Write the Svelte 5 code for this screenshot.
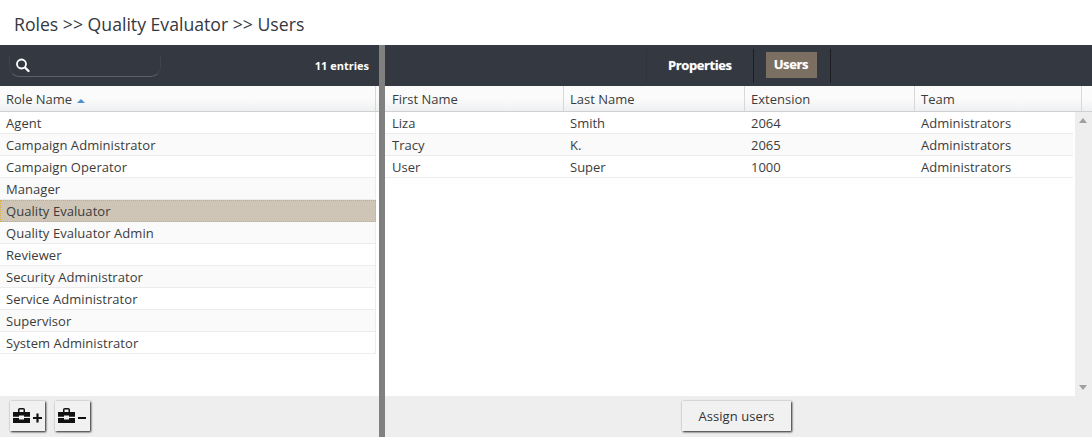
<script>
  const roles = [
    'Agent', 'Campaign Administrator', 'Campaign Operator', 'Manager', 'Quality Evaluator',
    'Quality Evaluator Admin', 'Reviewer', 'Security Administrator', 'Service Administrator',
    'Supervisor', 'System Administrator'
  ];
  const selected = 'Quality Evaluator';
  const users = [
    ['Liza', 'Smith', '2064', 'Administrators'],
    ['Tracy', 'K.', '2065', 'Administrators'],
    ['User', 'Super', '1000', 'Administrators']
  ];
  const columns = [
    ['First Name', 178],
    ['Last Name', 181],
    ['Extension', 170],
    ['Team', 167]
  ];
</script>

<div class="page">
  <h1 class="title">Roles &gt;&gt; Quality Evaluator &gt;&gt; Users</h1>
  <div class="panes">
    <section class="left">
      <div class="toolbar left-bar">
        <div class="search">
          <svg width="16" height="16" viewBox="0 0 16 16" fill="none" stroke="#fff">
            <circle cx="6.500" cy="6" r="4.500" stroke-width="1.800" />
            <path d="M10 9.500l3.500 3.500" stroke-width="2.400" stroke-linecap="round" />
          </svg>
        </div>
        <span class="count">11 entries</span>
      </div>
      <div class="head role-head">
        <div class="hcell role-cell">Role Name <span class="sort"></span></div>
      </div>
      <div class="body role-body">
        {#each roles as role, i}
          <div class="row role-row" class:alt={i % 2 === 1} class:selected={role === selected}>{role}</div>
        {/each}
      </div>
      <div class="foot left-foot">
        <button class="btn icon-btn" aria-label="Add role">
          <svg width="29" height="16" viewBox="0 0 29 16">
            <path d="M5 4V1.800C5 .8 5.800 0 6.800 0h3.400c1 0 1.800.8 1.800 1.800V4h-1.500V1.500H6.500V4z" fill="#111" />
            <path d="M0 4h17v4.800h-6V7.500H6v1.300H0z" fill="#111" />
            <path d="M0 10h6v1.500h5V10h6v5H0z" fill="#111" />
            <path d="M20 10h9M24.500 5.500v9" stroke="#111" stroke-width="2.200" />
          </svg>
        </button>
        <button class="btn icon-btn" aria-label="Remove role">
          <svg width="29" height="16" viewBox="0 0 29 16">
            <path d="M5 4V1.800C5 .8 5.800 0 6.800 0h3.400c1 0 1.800.8 1.800 1.800V4h-1.500V1.500H6.500V4z" fill="#111" />
            <path d="M0 4h17v4.800h-6V7.500H6v1.300H0z" fill="#111" />
            <path d="M0 10h6v1.500h5V10h6v5H0z" fill="#111" />
            <path d="M20 10h8" stroke="#111" stroke-width="2" />
          </svg>
        </button>
      </div>
    </section>

    <div class="splitter"></div>

    <section class="right">
      <div class="toolbar tabs">
        <div class="tab plain">Properties</div>
        <div class="tab-wrap"><div class="tab active">Users</div></div>
      </div>
      <div class="head user-head">
        {#each columns as [label, width]}
          <div class="hcell" style="width: {width}px">{label}</div>
        {/each}
        <div class="hcell filler"></div>
      </div>
      <div class="body user-body">
        <div class="user-rows">
          {#each users as user, i}
            <div class="row urow" class:alt={i % 2 === 1}>
              {#each user as value, c}
                <div class="ucell" style="width: {columns[c][1]}px">{value}</div>
              {/each}
            </div>
          {/each}
        </div>
        <div class="scrollbar">
          <span class="arrow up"></span>
          <span class="arrow down"></span>
        </div>
      </div>
      <div class="foot right-foot">
        <button class="btn assign">Assign users</button>
      </div>
    </section>
  </div>
</div>

<style>
  :global(body) {
    margin: 0;
    background: #fff;
  }
  .page {
    width: 1092px;
    height: 437px;
    display: flex;
    flex-direction: column;
    overflow: hidden;
    font-family: "Open Sans", sans-serif;
    font-size: 13px;
    color: #3c3c3c;
  }
  .title {
    margin: 0;
    height: 45px;
    box-sizing: border-box;
    padding: 12px 0 0 14px;
    font-size: 17.650px;
    line-height: 25px;
    font-weight: 400;
    color: #343841;
  }
  .panes {
    flex: 1;
    display: flex;
    min-height: 0;
  }
  .left {
    width: 379px;
    display: flex;
    flex-direction: column;
  }
  .right {
    flex: 1;
    min-width: 0;
    display: flex;
    flex-direction: column;
  }
  .splitter {
    width: 6px;
    background: #808080;
  }
  .toolbar {
    height: 41px;
    flex: none;
    background: #343841;
  }
  .left-bar {
    display: flex;
    align-items: center;
    justify-content: space-between;
    padding: 0 10px 0 9px;
  }
  .search {
    width: 152px;
    height: 21px;
    margin-top: 2px;
    box-sizing: border-box;
    padding: 2px 0 0 5px;
    border-bottom: 1px solid #5d6068;
    border-left: 1px solid #3f434c;
    border-right: 1px solid #3f434c;
    border-radius: 0 0 10px 10px;
  }
  .search svg {
    display: block;
  }
  .count {
    color: #fff;
    font-size: 11px;
    font-weight: 700;
  }
  .tabs {
    display: flex;
    justify-content: center;
    align-items: center;
  }
  .tab {
    color: #fff;
    font-size: 13px;
    font-weight: 700;
    letter-spacing: -0.4px;
    text-shadow: 0 0 1px rgba(255, 255, 255, 0.5);
  }
  .tab.plain {
    box-sizing: border-box;
    height: 34px;
    line-height: 33px;
    padding: 0 21px 0 21px;
    border-left: 1px solid #2f333b;
  }
  .tab-wrap {
    box-sizing: border-box;
    height: 34px;
    display: flex;
    align-items: center;
    padding: 0 13px 2px 12px;
    border-left: 1px solid #1b1d22;
    border-right: 1px solid #1b1d22;
  }
  .tab.active {
    height: 26px;
    line-height: 25px;
    padding: 0 9px 0 8px;
    background: #7a6f60;
  }
  .head {
    height: 26px;
    flex: none;
    display: flex;
    box-sizing: border-box;
    border-bottom: 1px solid #cfd0d2;
    background: linear-gradient(#fbfbfb 0 50%, #eff0f1 100%);
  }
  .user-head {
    padding-left: 1px;
  }
  .hcell {
    box-sizing: border-box;
    padding-left: 6px;
    line-height: 27px;
    border-right: 1px solid #d8d8d8;
    white-space: nowrap;
  }
  .role-cell {
    width: 376px;
  }
  .filler {
    flex: 1;
    border-right: 0;
  }
  .sort {
    display: inline-block;
    width: 0;
    height: 0;
    margin: 0 0 1px 1px;
    border-left: 4px solid transparent;
    border-right: 4px solid transparent;
    border-bottom: 4px solid #4a90d0;
  }
  .body {
    flex: 1;
    min-height: 0;
    background: #fff;
  }
  .role-body {
    padding-right: 3px;
  }
  .row {
    height: 22px;
    box-sizing: border-box;
    line-height: 22px;
    padding-left: 6px;
    border-bottom: 1px solid #ececec;
    border-right: 1px solid #ececec;
    white-space: nowrap;
  }
  .role-row {
    letter-spacing: 0.06px;
  }
  .row.alt {
    background: #fafafa;
  }
  .row.selected {
    background: #cfc5b6;
    outline: 1px dotted #dcae3a;
    outline-offset: -1px;
    border-color: transparent;
  }
  .user-body {
    display: flex;
  }
  .user-rows {
    flex: 1;
    min-width: 0;
  }
  .urow {
    display: flex;
    padding-left: 7px;
    border-right: 0;
    margin-right: 2px;
  }
  .ucell {
    flex: none;
  }
  .scrollbar {
    width: 17px;
    flex: none;
    background: #eee;
    position: relative;
  }
  .arrow {
    position: absolute;
    left: 4px;
    width: 0;
    height: 0;
    border-left: 4px solid transparent;
    border-right: 4px solid transparent;
  }
  .arrow.up {
    top: 6px;
    border-bottom: 5px solid #a0a0a0;
  }
  .arrow.down {
    bottom: 6px;
    border-top: 5px solid #a0a0a0;
  }
  .foot {
    height: 41px;
    flex: none;
    box-sizing: border-box;
    padding-bottom: 1px;
    background: #eee;
    display: flex;
    align-items: center;
  }
  .left-foot {
    gap: 10px;
    padding-left: 10px;
  }
  .right-foot {
    justify-content: center;
    padding-right: 4px;
  }
  .btn {
    height: 30px;
    border: 0;
    padding: 0;
    background: #f1f1f1;
    font: inherit;
    color: #333;
    box-shadow: 1px 1px 2px rgba(0, 0, 0, 0.85), 0 0 2px rgba(0, 0, 0, 0.12);
    display: flex;
    align-items: center;
    justify-content: center;
  }
  .icon-btn {
    width: 35px;
  }
  .assign {
    width: 109px;
    font-size: 13px;
    letter-spacing: 0.08px;
  }
</style>
